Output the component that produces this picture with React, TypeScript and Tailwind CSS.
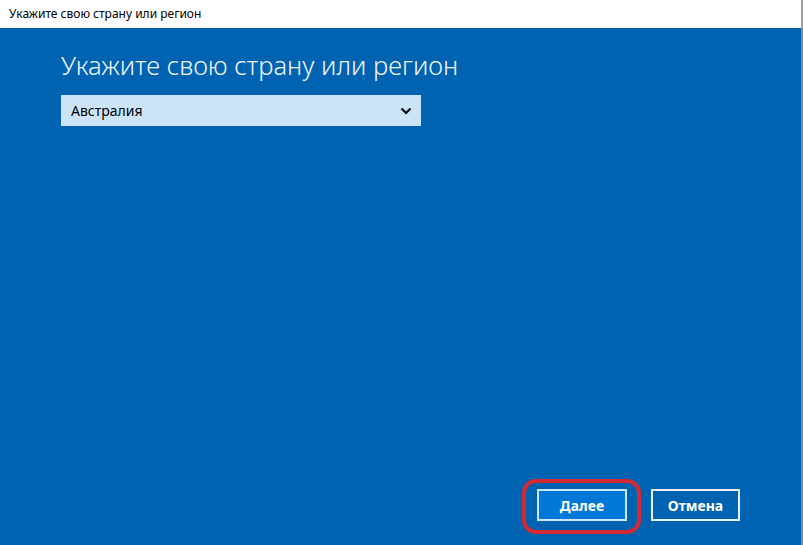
import React from "react";

export default function App() {
  return (
    <div className="w-[803px] h-[545px] flex flex-col overflow-hidden bg-white" style={{ fontFamily: '"Segoe UI", "Noto Sans", "Open Sans", sans-serif' }}>
      <div className="h-[28px] shrink-0 flex items-center pl-[9px] border-r-2 border-[#a0a0a0] bg-white">
        <span className="text-[12px] text-black leading-none">Укажите свою страну или регион</span>
      </div>
      <div className="flex-1 flex flex-col bg-[#0063b1] border-r-2 border-[#8a8a8a]">
        <div className="pl-[61px] pt-[20px]">
          <h1 className="text-[25.6px] font-light text-[#f0f6fb] leading-[36px]">Укажите свою страну или регион</h1>
          <div className="mt-[11px] w-[360px] h-[31px] bg-[#cce4f7] flex items-center justify-between pl-[10px] pr-[9px]">
            <span className="text-[14px] text-black">Австралия</span>
            <svg width="12" height="8" viewBox="0 0 12 8">
              <path d="M1.5 1.5 L6 6 L10.5 1.5" fill="none" stroke="#000" strokeWidth="2.2" />
            </svg>
          </div>
        </div>
        <div className="flex-1" />
        <div className="flex justify-end gap-[24px] pr-[61px] pb-[24px]">
          <div className="relative">
            <div className="absolute -left-[15px] -top-[10px] -right-[14px] -bottom-[13px] border-[4px] border-[#d42a35] rounded-[14px]" />
            <button className="w-[90px] h-[32px] bg-[#0078d7] border-2 border-[#cfe6f7] text-white text-[14px] font-bold">Далее</button>
          </div>
          <button className="w-[89px] h-[32px] bg-[#0063b1] border-2 border-[#e8f1f8] text-white text-[14px] font-bold">Отмена</button>
        </div>
      </div>
    </div>
  );
}
